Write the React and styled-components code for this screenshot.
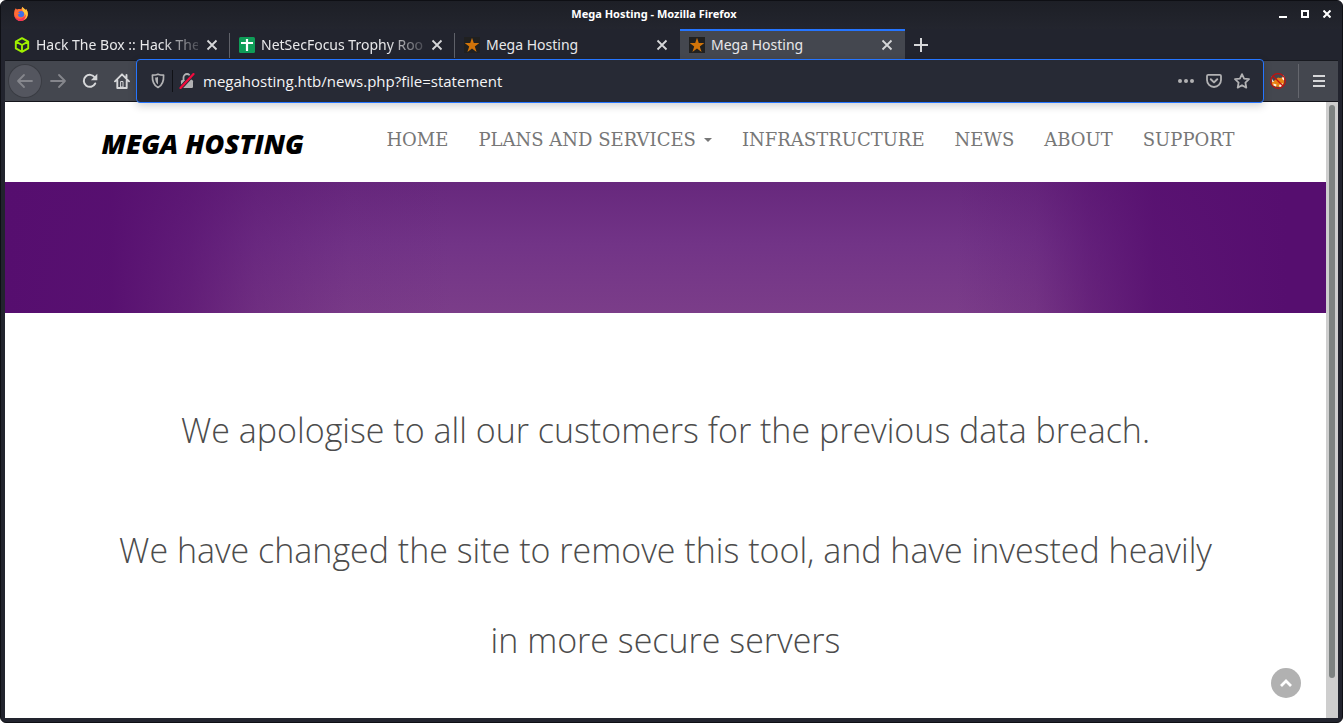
import React from "react";
import styled, { createGlobalStyle } from "styled-components";

const GlobalStyle = createGlobalStyle`
  *, *::before, *::after { box-sizing: border-box; }
  body { margin: 0; background: #fff; }
  button { padding: 0; border: 0; background: none; color: inherit; font: inherit; cursor: pointer; }
  svg { display: block; flex: none; }
`;

const Window = styled.div`
  height: 100vh;
  display: flex;
  flex-direction: column;
  overflow: hidden;
  padding: 0 4px 4px;
  background: #22242e;
  border: 1px solid #0e0f14;
  border-radius: 6px;
  color: #e8e8ea;
  font-family: "Noto Sans", sans-serif;
`;

const TitleBar = styled.header`
  height: 28px;
  flex: none;
  display: flex;
  align-items: center;
  padding: 0 7px 2px 12px;
  margin: 0 -4px;
  background: linear-gradient(#1d1f26, #23252e);
  border-radius: 6px 6px 0 0;
`;

const WindowTitle = styled.span`
  flex: 1;
  padding-left: 4px;
  text-align: center;
  font-size: 11px;
  font-weight: 700;
  line-height: 24px;
  color: #fff;
`;

const WindowControls = styled.div`
  display: flex;
  gap: 6px;
`;

const WindowButton = styled.button`
  width: 16px;
  height: 16px;
  display: grid;
  place-items: center;
  color: #fff;
`;

const TabStrip = styled.div`
  height: 31px;
  flex: none;
  display: flex;
`;

const Tab = styled.div`
  position: relative;
  width: 225px;
  display: flex;
  align-items: center;
  gap: 6px;
  padding: 0 10px 1px 9px;
  border-top: 2px solid ${(p) => (p.$active ? "#2575ff" : "transparent")};
  background: ${(p) => (p.$active ? "#44474f" : "transparent")};

  &::after {
    content: "";
    position: absolute;
    right: 0;
    top: 2px;
    bottom: 2px;
    width: 1px;
    background: ${(p) => (p.$divider ? "#5f6169" : "transparent")};
  }
`;

const TabLabel = styled.span`
  flex: 1;
  min-width: 0;
  white-space: nowrap;
  font-size: 14px;
  line-height: 24px;
  ${(p) => p.$fade && "mask-image: linear-gradient(90deg, #000 78%, rgba(0, 0, 0, 0.2));"}
`;

const IconButton = styled.button`
  width: ${(p) => p.$size || 16}px;
  height: ${(p) => p.$size || 16}px;
  flex: none;
  display: grid;
  place-items: center;
  color: ${(p) => p.$color || "#d6d7d9"};
  background: ${(p) => (p.$round ? "#54565f" : "transparent")};
  border-radius: ${(p) => (p.$round ? "50%" : "0")};
  box-shadow: ${(p) => (p.$round ? "0 0 0 1px #3a3c43" : "none")};
`;

const Toolbar = styled.div`
  height: 42px;
  flex: none;
  display: flex;
  align-items: center;
  padding-left: 4px;
  background: #44474f;
  border-top: 1px solid #181a20;
  border-bottom: 1px solid #14151b;
`;

const NavButtons = styled.div`
  display: flex;
  margin-right: -2px;

  & > :first-child { margin-right: 1px; }
`;

const AddressBar = styled.form`
  position: relative;
  z-index: 2;
  flex: 1;
  min-width: 0;
  height: 44px;
  display: flex;
  align-items: center;
  gap: 12px;
  padding: 0 13px;
  margin-right: 6px;
  background: #272a35;
  border: 1px solid #2575ff;
  border-radius: 4px;
  box-shadow: 0 3px 8px rgba(0, 0, 0, 0.18);
`;

const SiteIdentity = styled.div`
  display: flex;
  align-items: center;
  gap: 6px;
`;

const Divider = styled.span`
  width: 1px;
  height: ${(p) => p.$height}px;
  background: ${(p) => p.$color};
`;

const AddressInput = styled.input`
  flex: 1;
  min-width: 0;
  padding: 0;
  margin-left: -4px;
  border: 0;
  outline: 0;
  background: none;
  color: #f4f4f5;
  font: 15px/24px "Open Sans", sans-serif;
`;

const Extensions = styled.div`
  display: flex;
  align-items: center;
  gap: 12px;
  padding-right: 11px;
`;

const Viewport = styled.div`
  flex: 1;
  min-height: 0;
  display: flex;
  background: #fff;
`;

const Page = styled.div`
  flex: 1;
  min-width: 0;
  overflow: hidden;
`;

const ScrollTrack = styled.div`
  width: 12px;
  flex: none;
  padding: 3px 3px;
  background: #cecece;
`;

const ScrollThumb = styled.div`
  height: 94%;
  border-radius: 3px;
  background: #7d8281;
`;

const SiteHeader = styled.header`
  height: 80px;
  display: flex;
  justify-content: space-between;
  max-width: 1170px;
  margin: 0 auto;
  padding: 0 1px 0 21px;
`;

const Brand = styled.a`
  padding-top: 27px;
  color: #000;
  text-decoration: none;
  white-space: nowrap;
  font: italic 800 27px/30px "Open Sans", sans-serif;
`;

const SiteNav = styled.nav`
  display: flex;
  padding-top: 23px;
`;

const NavLink = styled.a`
  display: flex;
  align-items: center;
  gap: 8px;
  height: 30px;
  padding: 0 15px;
  color: #777;
  text-decoration: none;
  white-space: nowrap;
  font: 18px/30px "DejaVu Serif", serif;
`;

const Caret = styled.span`
  border: 4px solid transparent;
  border-top-color: #777;
  border-bottom: 0;
`;

const Banner = styled.div`
  height: 131px;
  background:
    linear-gradient(90deg, #560e6f 0%, rgba(86, 14, 111, 0.94) 8%, rgba(86, 14, 111, 0.65) 14%, rgba(86, 14, 111, 0.32) 19%, rgba(86, 14, 111, 0.08) 26%, rgba(86, 14, 111, 0) 34%, rgba(86, 14, 111, 0) 72%, rgba(86, 14, 111, 0.2) 78%, rgba(86, 14, 111, 0.55) 82%, rgba(86, 14, 111, 0.86) 87%, #560e6f 97%),
    linear-gradient(#67287d, #723487 48%, #7b3d89);
`;

const Statement = styled.main`
  display: flex;
  flex-direction: column;
  gap: 30px;
  max-width: 1170px;
  margin: 0 auto;
  padding: 72px 30px 0;
  text-align: center;
`;

const StatementLine = styled.p`
  margin: 0;
  color: #4c4c4c;
  font: 300 34px/90px "Open Sans", sans-serif;
`;

const BackToTop = styled.button`
  position: fixed;
  right: 42px;
  bottom: 25px;
  width: 30px;
  height: 30px;
  display: grid;
  place-items: center;
  border-radius: 50%;
  background: #b1b1b1;
  color: #fff;
`;

const CloseIcon = () => (
  <svg width="12" height="12" viewBox="0 0 12 12" fill="none" stroke="currentColor" strokeWidth="1.8">
    <path d="M1.5 1.5l9 9M10.5 1.5l-9 9" />
  </svg>
);

const FirefoxIcon = () => (
  <svg width="16" height="16" viewBox="0 0 16 16">
    <path d="M1.6 4.2L2.7 2.2 4 3.5C6 2.8 7 3 8.1 3.3L9.5.8c.7 1.6 2.2 2 3.2 3.2l.4-1c1.5 2 2.1 4 1.7 6.2A6.9 6.9 0 0 1 1.2 9.5c-.3-2 0-3.6.4-5.3z" fill="#ff6a35" />
    <path d="M9.5.8c.7 1.6 2.2 2 3.2 3.2l.4-1c2.2 3 2.3 6.2.4 8.8-1 1.3-2.5 2-3.7 1.8 2-2 2.6-4.8.8-7.5C9.3 4.7 8.7 2.8 9.5.8z" fill="#ffc83c" />
    <path d="M1.2 8.8c1 3 3.6 4.2 6.3 3.9 2.8-.3 4.5-2 5.4-4.6.2 4.3-2.2 7-5.2 7A6.7 6.7 0 0 1 1.2 8.8z" fill="#f5345a" />
    <path d="M5 6.2c1-.2 1.6-1.2 3-1.2 2 0 3.3 1.5 3.2 3.2S9.8 11.3 8 11.3 4.9 10 4.8 8.5l2.2-.8z" fill="#3f6fe8" />
  </svg>
);

const BoxIcon = () => (
  <svg width="16" height="16" viewBox="0 0 16 16" fill="none" stroke="#9fef00" strokeWidth="1.9" strokeLinejoin="round">
    <path d="M8 1.2l6.2 3.4v6.8L8 14.8l-6.2-3.4V4.6zM2 4.7L8 8l6-3.3M8 8v6.6" />
  </svg>
);

const SheetIcon = () => (
  <svg width="16" height="16" viewBox="0 0 16 16">
    <rect width="16" height="16" rx="1.5" fill="#0f9d58" />
    <path d="M2 6h12M8 2v12" stroke="#fff" strokeWidth="2.2" />
  </svg>
);

const StarFavicon = () => (
  <svg width="16" height="16" viewBox="0 0 16 16">
    <rect width="16" height="16" fill="#202020" />
    <path d="M8 .8l1.800 5.3h5.5l-4.5 3.3 1.8 5.5L8 11.6l-4.600 3.3 1.8-5.5L.7 6.1h5.5z" fill="#d17409" />
  </svg>
);

const BackIcon = () => (
  <svg width="18" height="18" viewBox="0 0 18 18" fill="none" stroke="currentColor" strokeWidth="1.8" strokeLinecap="round" strokeLinejoin="round">
    <path d="M16 9H2M8 3L2 9l6 6" />
  </svg>
);

const ForwardIcon = () => (
  <svg width="18" height="18" viewBox="0 0 18 18" fill="none" stroke="currentColor" strokeWidth="1.8" strokeLinecap="round" strokeLinejoin="round">
    <path d="M2 9h14M10 3l6 6-6 6" />
  </svg>
);

const ReloadIcon = () => (
  <svg width="16" height="16" viewBox="0 0 16 16" fill="none" stroke="currentColor" strokeWidth="2">
    <path d="M13.2 10.5A6 6 0 1 1 12.8 4.5" strokeLinecap="round" />
    <path d="M15.3 .8v6.4H8.9z" fill="currentColor" stroke="none" />
  </svg>
);

const HomeIcon = () => (
  <svg width="16" height="16" viewBox="0 0 16 16" fill="none" stroke="currentColor" strokeWidth="1.9" strokeLinejoin="round" strokeLinecap="round">
    <path d="M1 8.3L8 1.3l7 7M3.3 7.5V15h9.4V7.5M12.5 2v3" />
    <path d="M7 8.5h2V14H7z" strokeWidth="1" fill="none" />
  </svg>
);

const ShieldIcon = () => (
  <svg width="14" height="16" viewBox="0 0 14 16" fill="none" stroke="currentColor" strokeWidth="1.7" strokeLinejoin="round">
    <path d="M7 1.2C5.2 2 3.3 2.2 1.4 2.2c-.3 6 1 10 5.6 12.3 4.6-2.3 5.9-6.3 5.6-12.3C10.7 2.2 8.8 2 7 1.2z" />
    <path d="M7 3.9v7.7c-2-1.5-2.8-3.8-2.9-7.1C5.1 4.4 6 4.2 7 3.9z" fill="currentColor" stroke="none" />
  </svg>
);

const InsecureIcon = () => (
  <svg width="16" height="16" viewBox="0 0 16 16" fill="none">
    <path d="M4.5 7V4.5a3.5 3.5 0 0 1 7 0V7" stroke="#b1b1b3" strokeWidth="1.8" />
    <rect x="2" y="7" width="12" height="8" rx="1.2" fill="#b1b1b3" />
    <path d="M1.5 15L14.5 1" stroke="#272a35" strokeWidth="4" />
    <path d="M1.5 15L14.5 1" stroke="#f30a3d" strokeWidth="2.2" strokeLinecap="round" />
  </svg>
);

const DotsIcon = () => (
  <svg width="16" height="16" viewBox="0 0 16 16" fill="currentColor">
    <circle cx="2" cy="8" r="2" /><circle cx="8" cy="8" r="2" /><circle cx="14" cy="8" r="2" />
  </svg>
);

const PocketIcon = () => (
  <svg width="16" height="16" viewBox="0 0 16 16" fill="none" stroke="currentColor" strokeWidth="1.8" strokeLinecap="round" strokeLinejoin="round">
    <path d="M2.2 1.9h11.6c.7 0 1.2.5 1.2 1.2v4a7 6.9 0 0 1-14 0v-4c0-.7.5-1.2 1.2-1.2z" />
    <path d="M4.8 6.3L8 9.4l3.2-3.1" strokeWidth="2" />
  </svg>
);

const StarIcon = () => (
  <svg width="16" height="16" viewBox="0 0 16 16" fill="none" stroke="currentColor" strokeWidth="1.8" strokeLinejoin="round">
    <path d="M8 1.1l2.1 4.5 4.9.6-3.6 3.4.9 5L8 12.2l-4.3 2.4.9-5L1 6.2l4.9-.6z" />
  </svg>
);

const FoxIcon = () => (
  <svg width="16" height="16" viewBox="0 0 16 16" fill="none">
    <path d="M1.5 9.5L5 7l3-2.5L10 5l3.8-1 .4 5c-.4 3-2.2 4.5-5 5L5 13.5 2 12z" fill="#e88314" />
    <path d="M1 2.5l1.5 4.5 1.8 1.5L2.200 9zM13.500 2l1.500 3.500-1.500 2-1.500-2zM3.500 10.500l3 1-.5 2-2.500-1zM9 12l3.800-2-.6 3-2.600 1.200z" fill="#fff0df" />
    <circle cx="8" cy="8" r="7.300" stroke="#c4100e" strokeWidth="1.2" />
    <path d="M3 3l10 10" stroke="#c4100e" strokeWidth="1.3" />
  </svg>
);

const MenuIcon = () => (
  <svg width="12" height="12" viewBox="0 0 12 12" fill="currentColor">
    <path d="M0 0h12v2H0zM0 5h12v2H0zM0 10h12v2H0z" />
  </svg>
);

const PlusIcon = () => (
  <svg width="14" height="14" viewBox="0 0 14 14" stroke="currentColor" strokeWidth="2">
    <path d="M7 0v14M0 7h14" />
  </svg>
);

const tabs = [
  { label: "Hack The Box :: Hack The", icon: <BoxIcon />, fade: true, divider: true },
  { label: "NetSecFocus Trophy Roo", icon: <SheetIcon />, fade: true, divider: true },
  { label: "Mega Hosting", icon: <StarFavicon /> },
  { label: "Mega Hosting", icon: <StarFavicon />, active: true },
];

const links = ["HOME", "PLANS AND SERVICES", "INFRASTRUCTURE", "NEWS", "ABOUT", "SUPPORT"];

export default function App() {
  return (
    <>
      <GlobalStyle />
      <Window>
        <TitleBar>
          <FirefoxIcon />
          <WindowTitle>Mega Hosting - Mozilla Firefox</WindowTitle>
          <WindowControls>
            <WindowButton aria-label="Minimize">
              <svg width="8" height="8" viewBox="0 0 8 8" fill="currentColor"><path d="M0 6h8v2H0z" /></svg>
            </WindowButton>
            <WindowButton aria-label="Maximize">
              <svg width="8" height="8" viewBox="0 0 8 8" fill="none" stroke="currentColor" strokeWidth="2"><path d="M1 1h6v6H1z" /></svg>
            </WindowButton>
            <WindowButton aria-label="Close window">
              <svg width="8" height="8" viewBox="0 0 8 8" stroke="currentColor" strokeWidth="2"><path d="M.5.5l7 7M7.5.5l-7 7" /></svg>
            </WindowButton>
          </WindowControls>
        </TitleBar>
        <TabStrip role="tablist">
          {tabs.map((tab, i) => (
            <Tab key={i} role="tab" aria-selected={!!tab.active} $active={tab.active} $divider={tab.divider}>
              {tab.icon}
              <TabLabel $fade={tab.fade}>{tab.label}</TabLabel>
              <IconButton aria-label="Close tab"><CloseIcon /></IconButton>
            </Tab>
          ))}
          <IconButton $size={32} aria-label="New tab"><PlusIcon /></IconButton>
        </TabStrip>
        <Toolbar>
          <NavButtons>
            <IconButton $size={32} $round $color="#85868c" aria-label="Back"><BackIcon /></IconButton>
            <IconButton $size={32} $color="#85868c" aria-label="Forward"><ForwardIcon /></IconButton>
            <IconButton $size={32} aria-label="Reload"><ReloadIcon /></IconButton>
            <IconButton $size={32} aria-label="Home"><HomeIcon /></IconButton>
          </NavButtons>
          <AddressBar onSubmit={(e) => e.preventDefault()}>
            <SiteIdentity>
              <IconButton type="button" $color="#b1b1b3" aria-label="Tracking protection"><ShieldIcon /></IconButton>
              <Divider $height={22} $color="#101116" />
              <IconButton type="button" aria-label="Connection is not secure"><InsecureIcon /></IconButton>
            </SiteIdentity>
            <AddressInput aria-label="Address" defaultValue="megahosting.htb/news.php?file=statement" />
            <IconButton type="button" $color="#b1b1b3" aria-label="Page actions"><DotsIcon /></IconButton>
            <IconButton type="button" $color="#b1b1b3" aria-label="Save to Pocket"><PocketIcon /></IconButton>
            <IconButton type="button" $color="#b1b1b3" aria-label="Bookmark this page"><StarIcon /></IconButton>
          </AddressBar>
          <Extensions>
            <IconButton aria-label="Proxy extension"><FoxIcon /></IconButton>
            <Divider $height={34} $color="#65676e" />
            <IconButton aria-label="Open menu"><MenuIcon /></IconButton>
          </Extensions>
        </Toolbar>
        <Viewport>
          <Page>
            <SiteHeader>
              <Brand href="#">MEGA HOSTING</Brand>
              <SiteNav>
                {links.map((link) => (
                  <NavLink key={link} href="#">
                    {link}
                    {link === "PLANS AND SERVICES" && <Caret />}
                  </NavLink>
                ))}
              </SiteNav>
            </SiteHeader>
            <Banner />
            <Statement>
              <StatementLine>We apologise to all our customers for the previous data breach.</StatementLine>
              <StatementLine>
                We have changed the site to remove this tool, and have invested heavily in more secure servers
              </StatementLine>
            </Statement>
            <BackToTop aria-label="Back to top">
              <svg width="14" height="10" viewBox="0 0 14 10" fill="none" stroke="currentColor" strokeWidth="2.8">
                <path d="M2 8l5-5 5 5" />
              </svg>
            </BackToTop>
          </Page>
          <ScrollTrack><ScrollThumb /></ScrollTrack>
        </Viewport>
      </Window>
    </>
  );
}
